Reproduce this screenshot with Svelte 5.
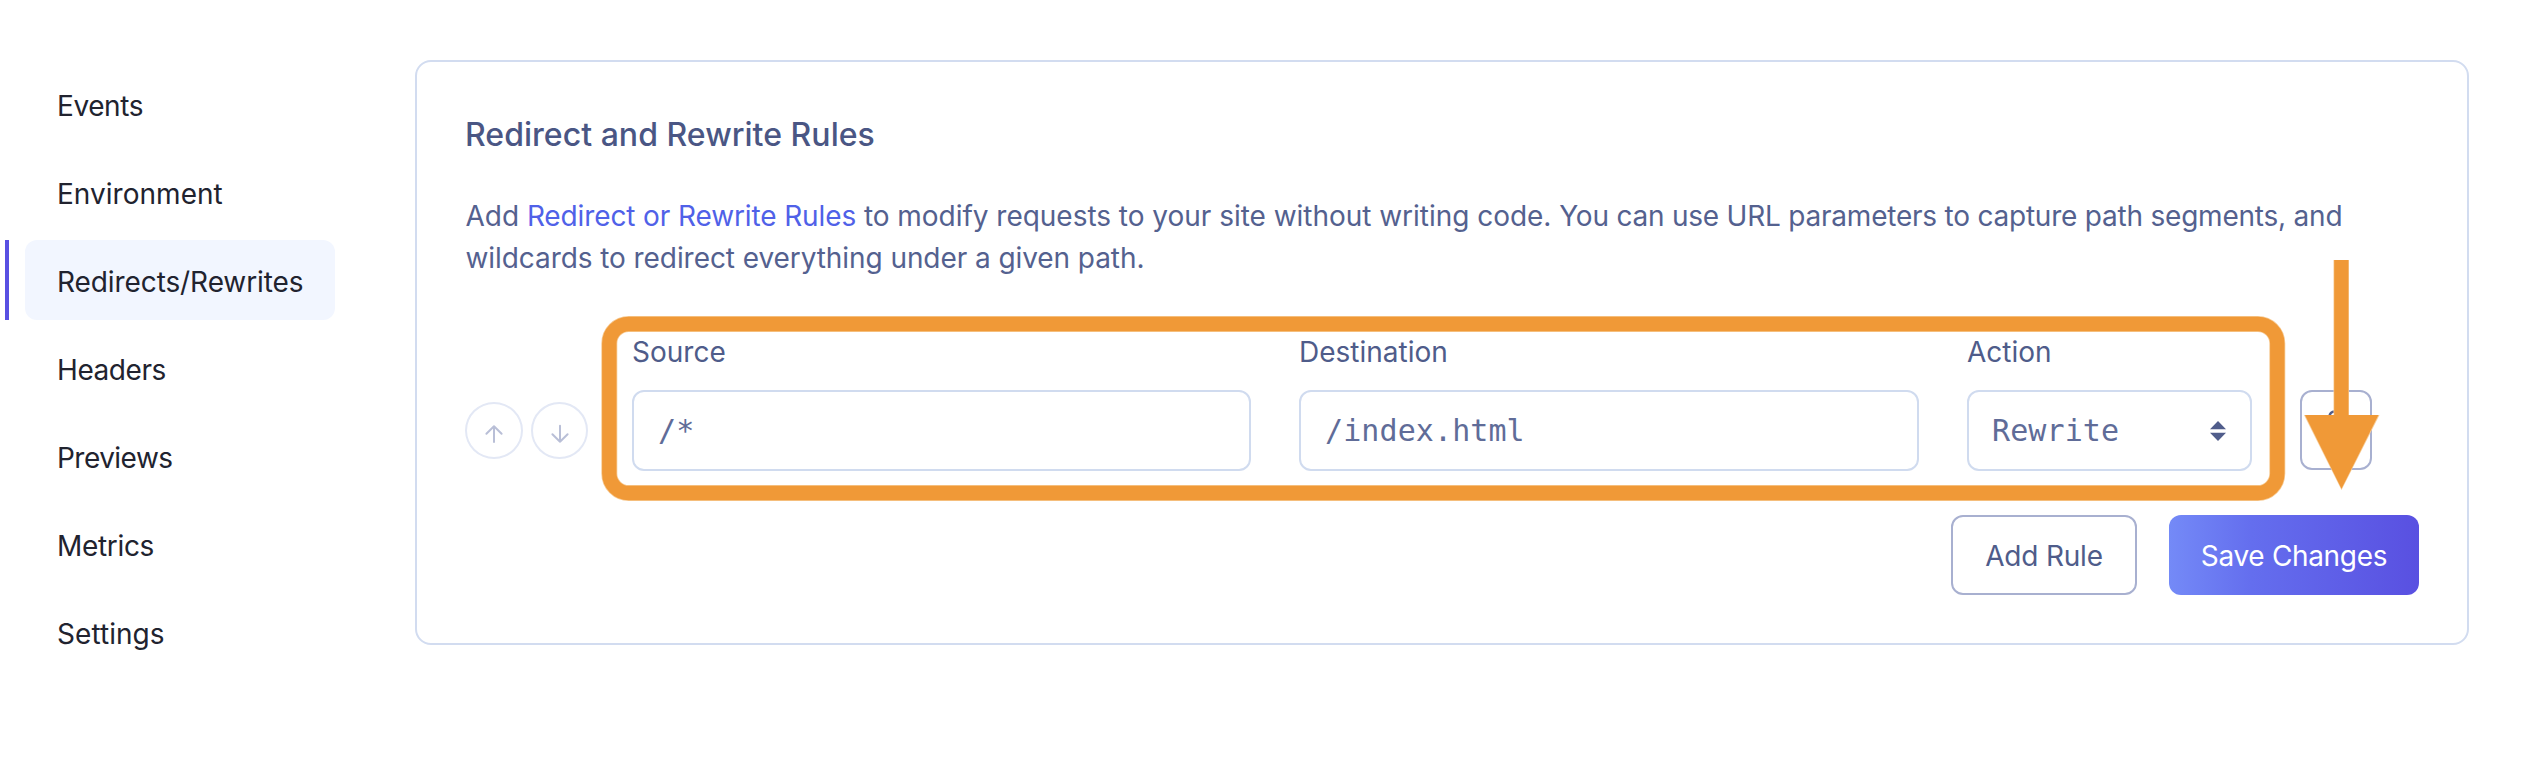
<script>
  const nav = [
    { label: 'Events', tracking: -0.415 },
    { label: 'Environment', tracking: 0.032 },
    { label: 'Redirects/Rewrites', tracking: -0.09, active: true },
    { label: 'Headers', tracking: -0.423 },
    { label: 'Previews', tracking: -0.527 },
    { label: 'Metrics', tracking: -0.322 },
    { label: 'Settings', tracking: 0.054 }
  ];
</script>

<div class="page">
  <nav class="sidebar">
    {#each nav as item}
      <a class="nav-item" class:active={item.active} href="#top">
        <span style="letter-spacing: {item.tracking}px">{item.label}</span>
      </a>
    {/each}
  </nav>

  <main class="card">
    <h2>Redirect and Rewrite Rules</h2>
    <p class="intro">Add <a href="#rules">Redirect or Rewrite Rules</a> to modify requests to your site without writing code. <span class="tight">You can use URL parameters to capture path segments, and</span><br /><span class="second">wildcards to redirect everything under a given path.</span></p>

    <div class="rule">
      <div class="order">
        <button class="circle" aria-label="Move up">
          <svg width="20" height="20" viewBox="0 0 20 20"><path d="M10 18V2.2M2.4 9.8 10 2.2l7.6 7.6" /></svg>
        </button>
        <button class="circle" aria-label="Move down">
          <svg width="20" height="20" viewBox="0 0 20 20"><path d="M10 1.800V17.800M2.400 10.200 10 17.800l7.600-7.600" /></svg>
        </button>
      </div>
      <div class="field source">
        <div class="label">Source</div>
        <div class="input">/*</div>
      </div>
      <div class="field destination">
        <div class="label">Destination</div>
        <div class="input">/index.html</div>
      </div>
      <div class="field action">
        <div class="label">Action</div>
        <div class="input select">
          <span>Rewrite</span>
          <svg width="16" height="20" viewBox="0 0 16 20"><path d="M8 0 16 8.200H0zM8 20 0 11.800h16z" /></svg>
        </div>
      </div>
      <button class="trash" aria-label="Delete rule">
        <svg width="36" height="40" viewBox="0 0 36 40"><path d="M4 9h28M11.500 9V6.500a5 5 0 0 1 5-5h3a5 5 0 0 1 5 5V9M8 9l1.500 22a3 3 0 0 0 3 3h11a3 3 0 0 0 3-3L28 9" /></svg>
      </button>
    </div>

    <div class="actions">
      <button class="btn add">Add Rule</button>
      <button class="btn save">Save Changes</button>
    </div>

    <svg class="callout" width="2054" height="585" viewBox="415 60 2054 585">
      <rect class="edge" x="609.3" y="324" width="1668" height="169" rx="19.500" />
      <rect class="ring" x="609.3" y="324" width="1668" height="169" rx="19.500" />
      <path class="glow" d="M2333.500 260h15.500v155h30.500L2341.500 490 2304 415h29.500z" />
      <path class="arrow" d="M2334.200 260h14.200v155h30L2341.500 488.700 2305 415h29.200z" />
    </svg>
  </main>
</div>

<style>
  :global(body) {
    background: #fff;
  }

  .page {
    display: flex;
    align-items: flex-start;
    box-sizing: border-box;
    width: 2542px;
    height: 762px;
    padding: 60px 73px 0 5px;
    overflow: hidden;
    font-family: 'Inter', sans-serif;
    font-size: 28px;
  }

  a {
    text-decoration: none;
  }

  button {
    margin: 0;
    padding: 0;
    font: inherit;
    color: inherit;
    background: none;
  }

  .sidebar {
    display: flex;
    flex-direction: column;
    gap: 8px;
    width: 330px;
    margin: 4px 80px 0 0;
  }

  .nav-item {
    display: flex;
    align-items: center;
    box-sizing: border-box;
    height: 80px;
    margin-left: 20px;
    padding: 3px 0 0 32px;
    border-radius: 12px;
    color: #21232f;
    white-space: nowrap;
  }

  .active {
    position: relative;
    background: #f2f6ff;
  }

  .active::before {
    content: '';
    position: absolute;
    top: 0;
    left: -20px;
    width: 4px;
    height: 80px;
    background: #5850e2;
  }

  .card {
    position: relative;
    box-sizing: border-box;
    width: 2054px;
    height: 585px;
    padding: 53px 48px 48px;
    border: 2px solid #d2dcf0;
    border-radius: 16px;
    color: #4f5c8a;
  }

  h2 {
    margin: 0 0 40px;
    font-size: 32px;
    font-weight: 500;
    line-height: 40px;
    letter-spacing: 0.03px;
    color: #4a5684;
  }

  .intro {
    margin: 0 0 52px;
    padding-left: 0.5px;
    line-height: 42px;
    letter-spacing: -0.029px;
    white-space: nowrap;
    color: #54618f;
  }

  .intro a {
    letter-spacing: -0.119px;
    color: #5061e8;
  }

  .tight {
    letter-spacing: -0.218px;
  }

  .second {
    letter-spacing: -0.073px;
  }

  .rule {
    display: flex;
    align-items: flex-end;
    height: 140px;
  }

  .order {
    display: flex;
    gap: 8px;
    margin: 0 43px 12px 0;
  }

  .circle {
    display: flex;
    align-items: center;
    justify-content: center;
    box-sizing: border-box;
    width: 58px;
    height: 57px;
    padding-top: 7px;
    border: 2px solid #e3e8f5;
    border-radius: 50%;
  }

  .order .circle + .circle {
    width: 57px;
    margin-right: 1px;
  }

  .circle svg {
    fill: none;
    stroke: #b9bfd7;
    stroke-width: 2;
    stroke-linecap: round;
    stroke-linejoin: round;
  }

  .field {
    margin-right: 48px;
  }

  .source {
    width: 619px;
  }

  .destination {
    width: 620px;
  }

  .action {
    width: 285px;
  }

  .label {
    height: 42px;
    margin-bottom: 17px;
    line-height: 42px;
  }

  .input {
    display: flex;
    align-items: center;
    justify-content: space-between;
    box-sizing: border-box;
    height: 81px;
    padding: 0 24px;
    border: 2px solid #d0dbef;
    border-radius: 12px;
    font-family: 'DejaVu Sans Mono', monospace;
    font-size: 30px;
    letter-spacing: 0.1px;
    color: #606c98;
  }

  .select {
    padding: 0 24px 0 23px;
  }

  .select svg {
    fill: #505d8b;
  }

  .trash {
    display: flex;
    align-items: center;
    justify-content: center;
    box-sizing: border-box;
    width: 72px;
    height: 80px;
    margin-bottom: 1px;
    border: 2px solid #a8b0d0;
    border-radius: 12px;
  }

  .trash svg {
    fill: none;
    stroke: #505d8b;
    stroke-width: 2.5;
  }

  .actions {
    display: flex;
    justify-content: flex-end;
    gap: 32px;
    margin-top: 44px;
  }

  .btn {
    box-sizing: border-box;
    height: 80px;
    padding-top: 2px;
    border: 2px solid #a8b0d0;
    border-radius: 12px;
  }

  .add {
    width: 186px;
    letter-spacing: -0.19px;
  }

  .save {
    width: 250px;
    border: 0;
    letter-spacing: -0.33px;
    color: #fff;
    background: linear-gradient(90deg, #748af7 0%, #646eee 33%, #5950e1 100%);
  }

  .callout {
    position: absolute;
    top: -2px;
    left: -2px;
    fill: none;
    pointer-events: none;
  }

  .edge {
    stroke: #f7cb95;
    stroke-width: 16;
  }

  .ring {
    stroke: #f09937;
    stroke-width: 14.4;
  }

  .glow {
    fill: #f7cb95;
  }

  .arrow {
    fill: #f09937;
  }
</style>
